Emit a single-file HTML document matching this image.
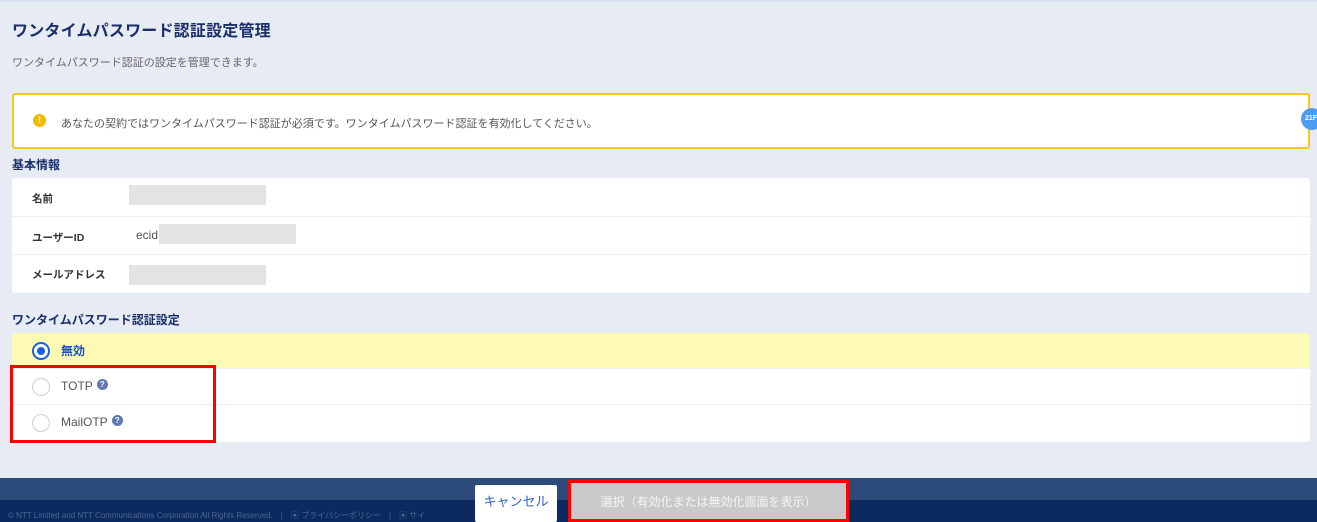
<!DOCTYPE html>
<html><head><meta charset="utf-8"><style>
*{margin:0;padding:0;box-sizing:border-box}
body{width:1317px;height:522px;overflow:hidden;background:#e7ebf4;font-family:"Liberation Sans","Noto Sans CJK JP",sans-serif;position:relative;color:#333}
.a{position:absolute}
.topline{left:0;top:0;width:1317px;height:2px;background:#d8dfee}
h1{position:absolute;left:12px;top:17px;font-size:16px;color:#1b2f6b;font-weight:bold;letter-spacing:0.2px}
.sub{left:12px;top:54px;font-size:11px;color:#666}
.alert{left:12px;top:93px;width:1298px;height:56px;background:#fff;border:2px solid #f8c620;border-radius:3px}
.alert .ic{position:absolute;left:19px;top:19px;width:13px;height:13px;border-radius:50%;background:#f5b800;color:#fff;font-size:10px;font-weight:bold;text-align:center;line-height:13px}
.alert .t{position:absolute;left:47px;top:20px;font-size:11px;color:#555}
.badge{left:1301px;top:108px;width:22px;height:22px;border-radius:50%;background:#4d9cf4;color:#fff;font-size:7px;font-weight:bold;line-height:22px;padding-left:4px}
.sh{font-size:12px;font-weight:bold;color:#1b2f6b}
.card{left:12px;background:#fff;border-radius:3px;width:1298px}
.row{position:absolute;left:0;width:1298px;border-bottom:1px solid #eceef3}
.lbl{position:absolute;left:20px;font-size:10.5px;font-weight:bold;color:#333}
.gray{position:absolute;background:#e3e3e3;height:20px}
.opt{position:absolute;left:0;width:1298px;height:36px;border-bottom:1px solid #eceef3}
.rad{position:absolute;left:20px;top:9px;width:18px;height:18px;border-radius:50%;border:1.5px solid #cfcfcf;background:#fff}
.rad.on{border:2px solid #1a5fe0}
.rad.on:after{content:"";position:absolute;left:3px;top:3px;width:8px;height:8px;border-radius:50%;background:#1a5fe0}
.ot{position:absolute;left:49px;top:10px;font-size:12px;color:#555}
.q{display:inline-block;width:11px;height:11px;border-radius:50%;background:#5f78b5;color:#fff;font-size:8px;font-weight:bold;text-align:center;line-height:11px;vertical-align:3px;margin-left:4px}
.red{border:3px solid #f00}
</style></head><body>
<div class="a topline"></div>
<h1>ワンタイムパスワード認証設定管理</h1>
<div class="a sub">ワンタイムパスワード認証の設定を管理できます。</div>
<div class="a alert"><div class="ic">!</div><div class="t">あなたの契約ではワンタイムパスワード認証が必須です。ワンタイムパスワード認証を有効化してください。</div></div>
<div class="a badge">21F</div>
<div class="a sh" style="left:12px;top:156px">基本情報</div>
<div class="a card" style="top:178px;height:115px">
 <div class="row" style="top:0;height:39px"><div class="lbl" style="top:13px">名前</div><div class="gray" style="left:117px;top:7px;width:137px"></div></div>
 <div class="row" style="top:39px;height:38px"><div class="lbl" style="top:13px">ユーザーID</div><div style="position:absolute;left:124px;top:11px;font-size:12px;color:#555">ecid</div><div class="gray" style="left:147px;top:7px;width:137px"></div></div>
 <div class="row" style="top:77px;height:38px;border:none"><div class="lbl" style="top:12px">メールアドレス</div><div class="gray" style="left:117px;top:10px;width:137px"></div></div>
</div>
<div class="a sh" style="left:12px;top:311px">ワンタイムパスワード認証設定</div>
<div class="a card" style="top:333px;height:109px">
 <div class="opt" style="top:0;background:#fdfab4;border-radius:3px 3px 0 0"><div class="rad on"></div><div class="ot" style="color:#1a4fc0;font-weight:bold;top:9px">無効</div></div>
 <div class="opt" style="top:36px"><div class="rad"></div><div class="ot">TOTP<span class="q">?</span></div></div>
 <div class="opt" style="top:72px;height:37px;border:none"><div class="rad"></div><div class="ot">MailOTP<span class="q">?</span></div></div>
</div>
<div class="a red" style="left:10px;top:365px;width:206px;height:78px"></div>
<div class="a" style="left:0;top:478px;width:1317px;height:22px;background:#2c4a7a"></div>
<div class="a" style="left:0;top:500px;width:1317px;height:22px;background:#0c2a60"></div>
<div class="a" style="left:8px;top:510px;font-size:8px;color:#4c6490;white-space:nowrap">© NTT Limited and NTT Communications Corporation All Rights Reserved.　|　▣ プライバシーポリシー　|　▣ サイ</div>
<div class="a" style="left:475px;top:485px;width:82px;height:37px;background:#fff;border-radius:2px;color:#2f62c9;font-size:13px;text-align:center;line-height:34px">キャンセル</div>
<div class="a red" style="left:568px;top:480px;width:281px;height:42px;background:#c9c9c9;color:#f5f5f5;font-size:12px;text-align:center;line-height:38px">選択（有効化または無効化画面を表示）</div>
</body></html>
